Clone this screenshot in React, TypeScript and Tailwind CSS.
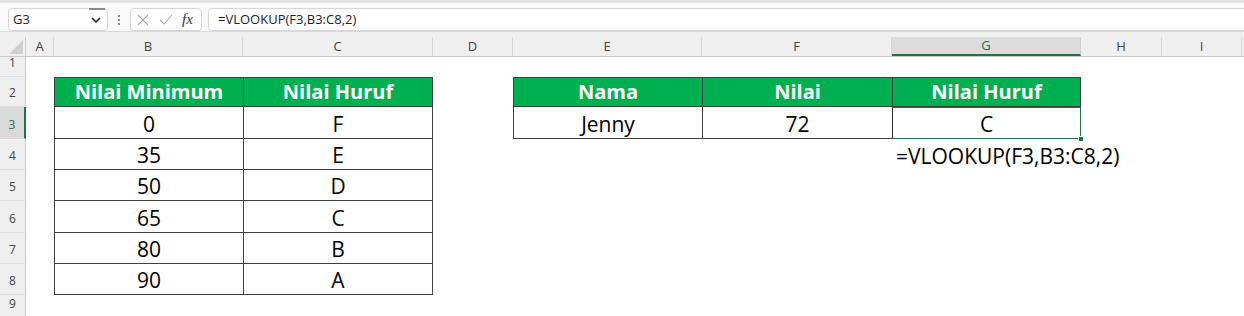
const cols =
  "grid grid-cols-[26px_28px_189px_190px_80px_189px_190px_189px_81px_80px_1fr]";

const letters = ["A", "B", "C", "D", "E", "F", "G", "H", "I"];

const lookup = [
  ["0", "F"],
  ["35", "E"],
  ["50", "D"],
  ["65", "C"],
  ["80", "B"],
  ["90", "A"],
];

const cellFont = { fontFamily: "'Open Sans', sans-serif" };

function FormulaBar() {
  return (
    <div className="bg-[#f9f9f9] border-b border-[#dadada]">
      <div className="h-[3px] bg-[#e4e4e4]" />
      <div className="flex items-start h-[28px] pt-[5px] pl-[8px]" style={cellFont}>
        {/* name box */}
        <div className="relative w-[100px] h-[23px] bg-white border border-[#d6d6d6] rounded-[4px] flex items-center pl-[4px] text-[13px] text-[#222]">
          G3
          <div className="absolute right-[2px] top-[-1px] w-[16px] h-[2px] bg-[#8a8a8a]" />
          <svg className="absolute right-[6px] top-[8px]" width="10" height="6" viewBox="0 0 10 6">
            <path d="M1 1 L5 5 L9 1" fill="none" stroke="#222" strokeWidth="1.6" />
          </svg>
        </div>
        {/* splitter dots */}
        <div className="w-[22px] h-[23px] flex flex-col items-center justify-center gap-[2px]">
          <span className="w-[2px] h-[2px] bg-[#8c8c8c]" />
          <span className="w-[2px] h-[2px] bg-[#8c8c8c]" />
          <span className="w-[2px] h-[2px] bg-[#8c8c8c]" />
        </div>
        {/* cancel / enter / fx */}
        <div className="w-[72px] h-[23px] bg-white border border-[#d6d6d6] rounded-[4px] flex items-center">
          <svg className="ml-[6px]" width="12" height="12" viewBox="0 0 12 12">
            <path d="M1 1 L11 11 M11 1 L1 11" stroke="#a6a6a6" strokeWidth="1.1" />
          </svg>
          <svg className="ml-[10px]" width="14" height="11" viewBox="0 0 14 11">
            <path d="M1 6 L5 10 L13 1" fill="none" stroke="#a6a6a6" strokeWidth="1.1" />
          </svg>
          <span
            className="ml-[9px] text-[15px] italic text-[#333] leading-none"
            style={{ fontFamily: "'Liberation Serif', serif" }}
          >
            fx
          </span>
        </div>
        {/* formula box */}
        <div className="ml-[6px] flex-1 -mr-[6px] h-[23px] bg-white border border-[#d6d6d6] rounded-[4px] flex items-center pl-[9px] text-[13px] text-[#222]">
          =VLOOKUP(F3,B3:C8,2)
        </div>
      </div>
    </div>
  );
}

function ColumnHeaders() {
  return (
    <div className={`${cols} h-[25px] bg-[#efefef] border-b border-[#c9c9c9] items-end`} style={cellFont}>
      <div className="h-[19px] border-r border-[#cfcfcf] flex justify-end items-end pr-[2px] pb-[2px]">
        <svg width="14" height="14" viewBox="0 0 14 14">
          <path d="M14 0 L14 14 L0 14 Z" fill="#cfcfcf" />
        </svg>
      </div>
      {letters.map((l) => (
        <div
          key={l}
          className={
            l === "G"
              ? "h-[19px] bg-[#dcdcdc] border-b-2 border-[#217346] border-r border-r-[#cfcfcf] flex items-center justify-center text-[13px] text-[#217346]"
              : "h-[19px] border-r border-[#d6d6d6] flex items-center justify-center text-[13px] text-[#444]"
          }
        >
          {l}
        </div>
      ))}
      <div className="h-[19px]" />
    </div>
  );
}

function RowHead({ n, active }: { n: number; active?: boolean }) {
  return (
    <div
      className={
        active
          ? "bg-[#dadada] border-r-2 border-r-[#217346] border-b border-[#d6d6d6] flex items-end justify-center pb-[4px] text-[12px] text-[#217346]"
          : "bg-[#efefef] border-r border-r-[#c9c9c9] border-b border-[#dedede] flex items-end justify-center pb-[4px] text-[12px] text-[#444]"
      }
      style={cellFont}
    >
      {n}
    </div>
  );
}

const body = "flex items-end justify-center text-[21px] leading-[28px] text-black";
const head = "flex items-end justify-center text-[20px] leading-[28px] font-bold text-white bg-[#00b050]";

export default function App() {
  return (
    <div className="w-[1244px] h-[316px] overflow-hidden bg-white">
      <FormulaBar />
      <ColumnHeaders />
      <div
        className={`${cols} grid-rows-[20px_30px_32px_31px_31px_32px_31px_31px_1fr] h-[259px]`}
        style={cellFont}
      >
        {/* row 1 */}
        <RowHead n={1} />
        <div className="col-span-10" />

        {/* row 2: headers */}
        <RowHead n={2} />
        <div />
        <div className={`${head} border-l border-t border-b border-[#404040]`}>Nilai Minimum</div>
        <div className={`${head} border border-[#404040]`}>Nilai Huruf</div>
        <div />
        <div className={`${head} border-l border-t border-b border-[#404040]`}>Nama</div>
        <div className={`${head} border-l border-t border-b border-[#404040]`}>Nilai</div>
        <div className={`${head} border border-[#404040]`}>Nilai Huruf</div>
        <div className="col-span-3" />

        {/* rows 3-8 */}
        {lookup.map(([min, grade], i) => (
          <div key={min} className="contents">
            <RowHead n={i + 3} active={i === 0} />
            <div />
            <div className={`${body} border-l border-b border-[#404040]`}>{min}</div>
            <div className={`${body} border-l border-r border-b border-[#404040]`}>{grade}</div>
            <div />
            {i === 0 ? (
              <>
                <div className={`${body} border-l border-b border-[#404040]`}>Jenny</div>
                <div className={`${body} border-l border-b border-[#404040]`}>72</div>
                <div className={`${body} relative border border-t-[#1e6b41] border-r-[#217346] border-b-[#217346] border-l-[#2b2b2b]`}>
                  C
                  <span className="absolute right-[-4px] bottom-[-4px] w-[6px] h-[6px] bg-[#217346] border border-white" />
                </div>
              </>
            ) : i === 1 ? (
              <>
                <div />
                <div />
                <div className={`${body} justify-start pl-[4px] whitespace-nowrap`}>=VLOOKUP(F3,B3:C8,2)</div>
              </>
            ) : (
              <>
                <div />
                <div />
                <div />
              </>
            )}
            <div className="col-span-3" />
          </div>
        ))}

        {/* row 9 */}
        <RowHead n={9} />
        <div className="col-span-10" />
      </div>
    </div>
  );
}
